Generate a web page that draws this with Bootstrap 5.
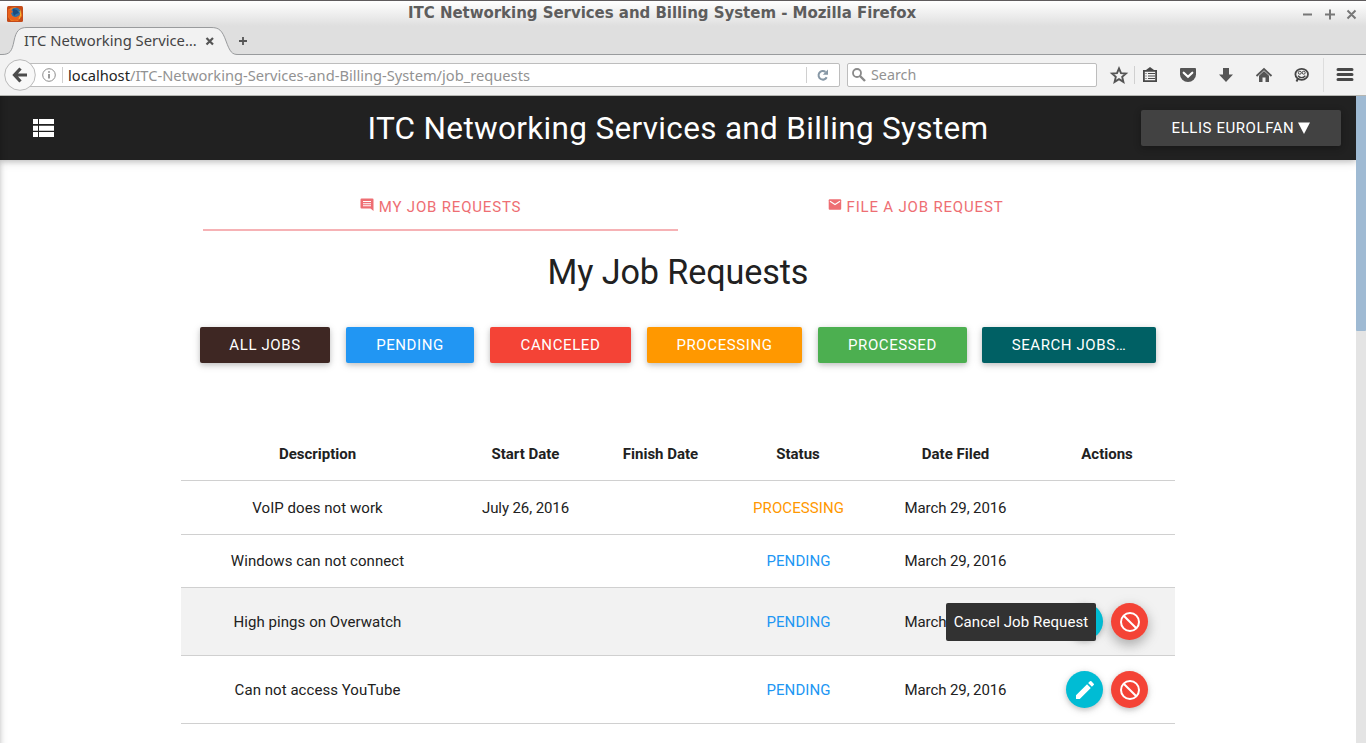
<!DOCTYPE html>
<html lang="en">
<head>
<meta charset="utf-8">
<title>ITC Networking Services and Billing System</title>
<link href="https://cdn.jsdelivr.net/npm/bootstrap@5.3.0/dist/css/bootstrap.min.css" rel="stylesheet">
<script src="https://cdn.jsdelivr.net/npm/bootstrap@5.3.0/dist/js/bootstrap.bundle.min.js" defer></script>
<style>
body{width:1366px;height:743px;overflow:hidden;background:#fff;font-family:Roboto,sans-serif;font-size:15px;line-height:1.5;color:#212121}
svg{display:block;flex:none}
.ui{font-family:"Noto Sans","Open Sans",sans-serif;color:#444}
.chrome{height:96px;background:#f2f2f2;border-bottom:1px solid #b5b6b2}
.topstrip{height:55px;border-top:1px solid #5f5b5d;border-bottom:1px solid #999b9d;background:linear-gradient(#fff,#dfdfdf 25px,#dfdfdf)}
.titlebar{height:25px}
.appicon{margin-left:7px}
.wintitle{font:bold 15px/23px "DejaVu Sans",sans-serif;color:#5d5d5d;width:510px;margin-left:385px;white-space:nowrap;letter-spacing:-.04px}
.winctl{margin-right:9px}
.tabshape{width:240px;height:29px}
.tablabel{left:24px;top:3px;font-size:14.8px;line-height:23px;white-space:nowrap}
.toolbar{height:40px}
.field{height:24px;background:#fff;border:1px solid #bdbdbd;border-radius:2px}
.urlfield{width:817px;margin-left:23px;padding-left:18px}
.searchfield{width:250px;margin-left:7px;padding-left:4px}
.back{left:4px;top:59px;z-index:2}
.urltext{font-size:14.67px;line-height:22px;color:#929292;white-space:nowrap;margin-left:5px}
.searchfield .urltext{font-size:14.3px}
.urltext b{font-weight:400;color:#222}
.vline{width:1px;height:16px;background:#d0d0d0}
.viewport{height:647px}
.page{width:1356px;overflow:hidden}
.edge{left:-10px;top:-10px;width:10px;height:670px;z-index:5}
.edge,.z1{box-shadow:0 2px 5px 0 rgba(0,0,0,.16),0 2px 10px 0 rgba(0,0,0,.12)}
.z2{box-shadow:0 5px 11px 0 rgba(0,0,0,.18),0 4px 15px 0 rgba(0,0,0,.15)}
.topnav{height:64px;background:#212121;padding:0 15px}
.sitetitle{font-size:31.5px;line-height:64px;white-space:nowrap;letter-spacing:.325px;padding-top:2px}
.sidecol{width:200px}
.mbtn{height:36px;padding:0;border:0;border-radius:2px;font-size:15px;line-height:36px;letter-spacing:.6px;color:#fff}
.mbtn:hover{color:#fff}
.user{background:#424242;gap:4px;letter-spacing:.57px}
.reqtabs{width:950px;height:48px;margin:23px 0 0 203px}
.reqtab{width:475px;height:48px;font-size:15px;line-height:48px;letter-spacing:.82px;color:#ee6e73;border-bottom:2px solid transparent;gap:5px}
.reqtab svg{margin-top:15px}
.reqtab.on{border-color:#f6b2b5}
.pagetitle{font-size:34.2px;line-height:38px;font-weight:400;margin:22px 0 36px;color:#212121;letter-spacing:-.12px}
.filters{margin-left:200px;width:956px;gap:16px}
.jobs{width:994px;margin:64px 0 0 181px;table-layout:fixed;border-collapse:separate;border-spacing:0;font-size:15px;text-align:center}
.jobs th,.jobs td{border-bottom:1px solid #d0d0d0;padding:0;vertical-align:middle;line-height:22px}
.jobs th{font-weight:700}
.jobs td:nth-child(1){letter-spacing:.05px}
.jobs td:nth-child(2),.jobs td:nth-child(5){letter-spacing:-.1px}
.jobs td:nth-child(4){letter-spacing:.08px;padding-left:1px}
.r1{height:54px}.r2{height:53px}.r3{height:68px}
.hot td{background:#f2f2f2}
.st-o{color:#ff9800}.st-b{color:#2196f3}
.fab{width:37px;height:37px;border-radius:50%;display:flex;align-items:center;justify-content:center}
.tip{right:79px;top:15px;width:150px;height:38px;border-radius:2px;background:#323232;color:#fff;font-size:15px;line-height:38px;white-space:nowrap;z-index:3;letter-spacing:.1px}
.track{width:10px;background:#e4e4e4}
.thumb{height:235px;background:#9fbad3;border-radius:0 0 1px 1px}
</style>
</head>
<body>
<div class="chrome position-relative">
  <div class="topstrip ui">
    <div class="titlebar d-flex align-items-center">
      <svg class="appicon" width="16" height="16" viewBox="0 0 16 16"><rect width="16" height="16" rx="1.500" fill="#c44a18"/><path d="M1 4Q4 1 8 1l6 3 1 6-4 5H4L1 11z" fill="#ee7a20"/><circle cx="8.700" cy="6.500" r="4.800" fill="#2f70a4"/><path d="M6 3l4 1 2 3-3 1-2 2-1-3z" fill="#1b4b7d"/><path d="M1 3q1 1 3 1l2 2-2 1q0 4 5 4 4-1 5-5 1 6-3 8-5 2-9-2Q0 8 1 3z" fill="#e8611b"/><path d="M13 5q2 4-1 8" stroke="#f8b830" fill="none"/></svg>
      <div class="wintitle">ITC Networking Services and Billing System - Mozilla Firefox</div>
      <svg class="winctl ms-auto" width="55" height="12" viewBox="0 0 55 12" stroke="#777" stroke-width="2" fill="none"><path d="M1 6.500h9M23 6.500h10M28 1.500v10M45.500 2.500l8 8M53.500 2.500l-8 8"/></svg>
    </div>
    <div class="position-relative d-flex">
      <svg class="tabshape" viewBox="0 0 240 29"><path d="M0 28.500H2C10 28.500 12 25 14 15S19 1.500 27 1.500H211C219 1.500 222 4 226 15S232 28.500 238 28.500H240V30H0z" fill="#f2f2f2" stroke="#999b9d"/><path d="M206.500 12l6.500 6.500M213 12l-6.500 6.500" stroke="#555" stroke-width="2.200"/></svg>
      <svg width="8" height="29" viewBox="0 0 8 29" style="margin-left:-1px"><path d="M0 15h8M4 11v8" stroke="#555" stroke-width="1.800"/></svg>
      <span class="tablabel position-absolute">ITC Networking Service…</span>
    </div>
  </div>
  <svg class="back position-absolute" width="32" height="32" viewBox="0 0 32 32"><circle cx="16" cy="16" r="15.300" fill="#f8f8f8" stroke="#b9b9b9"/><path d="M16.500 9.500l-6 6.500 6 6.500M10.500 16H23" stroke="#4c4c4c" stroke-width="3.200" fill="none"/></svg>
  <div class="toolbar ui d-flex align-items-center">
    <div class="field urlfield d-flex align-items-center">
      <svg width="14" height="14" viewBox="0 0 14 14"><circle cx="7" cy="7" r="6.300" fill="none" stroke="#8d8d8d"/><path d="M7 6v4.500M7 3.300v1.500" stroke="#777" stroke-width="1.500"/></svg>
      <span class="vline" style="margin-left:6px"></span>
      <span class="urltext"><b>localhost</b>/ITC-Networking-Services-and-Billing-System/job_requests</span>
      <span class="vline ms-auto"></span>
      <svg width="14" height="14" viewBox="0 0 14 14" style="margin:0 9px"><path d="M10.700 9.300A4.300 4.300 0 1 1 9.500 3.900" fill="none" stroke="#8798a6" stroke-width="2"/><path d="M12 1.500v5.300H6.800z" fill="#8798a6"/></svg>
    </div>
    <div class="field searchfield d-flex align-items-center">
      <svg width="14" height="14" viewBox="0 0 14 14"><circle cx="5" cy="5" r="4" fill="none" stroke="#8a8a8a" stroke-width="1.800"/><path d="M8 8l5 5" stroke="#8a8a8a" stroke-width="2.400"/></svg>
      <span class="urltext">Search</span>
    </div>
    <svg width="269" height="40" viewBox="1097 55 269 40" fill="none">
      <path d="M1119 68.500l2 4.600 5 .5-3.800 3.300 1.200 5-4.400-2.700-4.400 2.700 1.200-5-3.800-3.300 5-.5z" stroke="#555" stroke-width="1.900"/>
      <path d="M1134.500 66v18" stroke="#d0d0d0"/>
      <path d="M1143.900 70.800h12.200v10.400h-12.200z" stroke="#484848" stroke-width="1.800"/><path d="M1146 70l4-3 4 3z" fill="#484848"/><path d="M1148 73.500h7M1148 76h7M1148 78.500h7M1145.500 73.500h1M1145.500 76h1M1145.500 78.500h1" stroke="#484848"/>
      <path d="M1181 68h14q1 0 1 1v5.500a8 7.500 0 0 1-16 0V69q0-1 1-1z" fill="#555"/><path d="M1183.700 72.700l4.300 4.100 4.300-4.100" stroke="#fff" stroke-width="2.200" stroke-linecap="round"/>
      <path d="M1223 68h6v6.500h4l-7 7.500-7-7.500h4z" fill="#555"/>
      <path d="M1256.500 76l7.500-7 7.500 7" stroke="#555" stroke-width="1.800"/><path d="M1259 75.800l5-4.700 5 4.700V82h-3.500v-4.500h-3V82H1259z" fill="#555"/>
      <path d="M1296.500 81.500l1.500-3" stroke="#444" stroke-width="2"/><ellipse cx="1301.700" cy="74.300" rx="6.300" ry="5.500" stroke="#444" stroke-width="1.800"/><path d="M1298 75.700q3.700 4 7.400 0" stroke="#444" stroke-width="1.300"/><circle cx="1299.800" cy="72.700" r="1.500" stroke="#444"/><circle cx="1303.700" cy="72.700" r="1.500" stroke="#444"/>
      <path d="M1323.500 58v34" stroke="#ddd"/>
      <path d="M1338 69.500h14M1338 74.500h14M1338 79.500h14" stroke="#484848" stroke-width="3" stroke-linecap="round"/>
    </svg>
  </div>
</div>
<div class="viewport d-flex">
  <main class="page position-relative">
    <div class="edge position-absolute"></div>
    <nav class="topnav z1 d-flex align-items-center justify-content-between text-white position-relative">
      <div class="sidecol"><svg width="21" height="18" viewBox="0 0 21 18" fill="#fff" style="margin-left:18px"><path d="M0 0h5v5H0zM6 0h15v5H6zM0 6.700h5v5H0zM6 6.700h15v5H6zM0 13h5v5H0zM6 13h15v5H6z"/></svg></div>
      <div class="sitetitle">ITC Networking Services and Billing System</div>
      <button class="btn mbtn user z1 sidecol d-flex justify-content-center align-items-center"><span>ELLIS EUROLFAN</span><svg width="12" height="12" viewBox="0 0 12 12"><path d="M0 .5h12l-6 11.500z" fill="#fff"/></svg></button>
    </nav>
    <div class="reqtabs d-flex">
      <div class="reqtab on d-flex justify-content-center"><svg width="14" height="14" viewBox="0 0 14 14"><path d="M1.500.5h11q1 0 1 1V13l-3-2.500h-9q-1 0-1-1v-8q0-1 1-1zM3 3v1h8V3zm0 2.200v1h8v-1zm0 2.100v1h8v-1z" fill="#ee6e73" fill-rule="evenodd"/></svg><span>MY JOB REQUESTS</span></div>
      <div class="reqtab d-flex justify-content-center"><svg width="14" height="14" viewBox="0 0 14 14"><rect x=".7" y="1.200" width="12.500" height="10.500" rx="1" fill="#ee6e73"/><path d="M2 3.300l5 3.200 5-3.200" stroke="#fff" stroke-width="1.200" fill="none"/></svg><span>FILE A JOB REQUEST</span></div>
    </div>
    <h1 class="pagetitle text-center">My Job Requests</h1>
    <div class="filters d-flex">
      <button class="btn mbtn z1" style="width:130px;background:#3e2723">ALL JOBS</button>
      <button class="btn mbtn z1" style="width:128px;background:#2196f3">PENDING</button>
      <button class="btn mbtn z1" style="width:141px;background:#f44336">CANCELED</button>
      <button class="btn mbtn z1" style="width:155px;background:#ff9800">PROCESSING</button>
      <button class="btn mbtn z1" style="width:149px;background:#4caf50">PROCESSED</button>
      <button class="btn mbtn z1" style="width:174px;margin-left:-1px;background:#006064">SEARCH JOBS…</button>
    </div>
    <table class="jobs">
      <colgroup><col style="width:273px"><col style="width:143px"><col style="width:127px"><col style="width:148px"><col style="width:167px"><col style="width:136px"></colgroup>
      <thead><tr class="r1"><th>Description</th><th>Start Date</th><th>Finish Date</th><th>Status</th><th>Date Filed</th><th>Actions</th></tr></thead>
      <tbody>
        <tr class="r1"><td>VoIP does not work</td><td>July 26, 2016</td><td></td><td class="st-o">PROCESSING</td><td>March 29, 2016</td><td></td></tr>
        <tr class="r2"><td>Windows can not connect</td><td></td><td></td><td class="st-b">PENDING</td><td>March 29, 2016</td><td></td></tr>
        <tr class="r3 hot"><td>High pings on Overwatch</td><td></td><td></td><td class="st-b">PENDING</td><td>March 29, 2016</td>
          <td class="position-relative"><div class="d-flex justify-content-center gap-2"><span class="fab z1" style="background:#00bcd4"></span><span class="fab z2" style="background:#f44336"><svg width="22" height="22" viewBox="0 0 22 22" fill="none" stroke="#fff" stroke-width="2"><circle cx="11" cy="11" r="9"/><path d="M4.700 4.700l12.600 12.600"/></svg></span></div><div class="tip position-absolute">Cancel Job Request</div></td></tr>
        <tr class="r3"><td>Can not access YouTube</td><td></td><td></td><td class="st-b">PENDING</td><td>March 29, 2016</td>
          <td><div class="d-flex justify-content-center gap-2"><span class="fab z1" style="background:#00bcd4"><svg width="24" height="24" viewBox="0 0 24 24" fill="#fff"><path d="M3 17.250V21h3.750L17.810 9.940l-3.750-3.750L3 17.250zM20.710 7.040a1 1 0 0 0 0-1.410l-2.340-2.340a1 1 0 0 0-1.410 0l-1.830 1.830 3.750 3.750 1.830-1.830z"/></svg></span><span class="fab z1" style="background:#f44336"><svg width="22" height="22" viewBox="0 0 22 22" fill="none" stroke="#fff" stroke-width="2"><circle cx="11" cy="11" r="9"/><path d="M4.700 4.700l12.600 12.600"/></svg></span></div></td></tr>
      </tbody>
    </table>
  </main>
  <div class="track"><div class="thumb"></div></div>
</div>
</body>
</html>
